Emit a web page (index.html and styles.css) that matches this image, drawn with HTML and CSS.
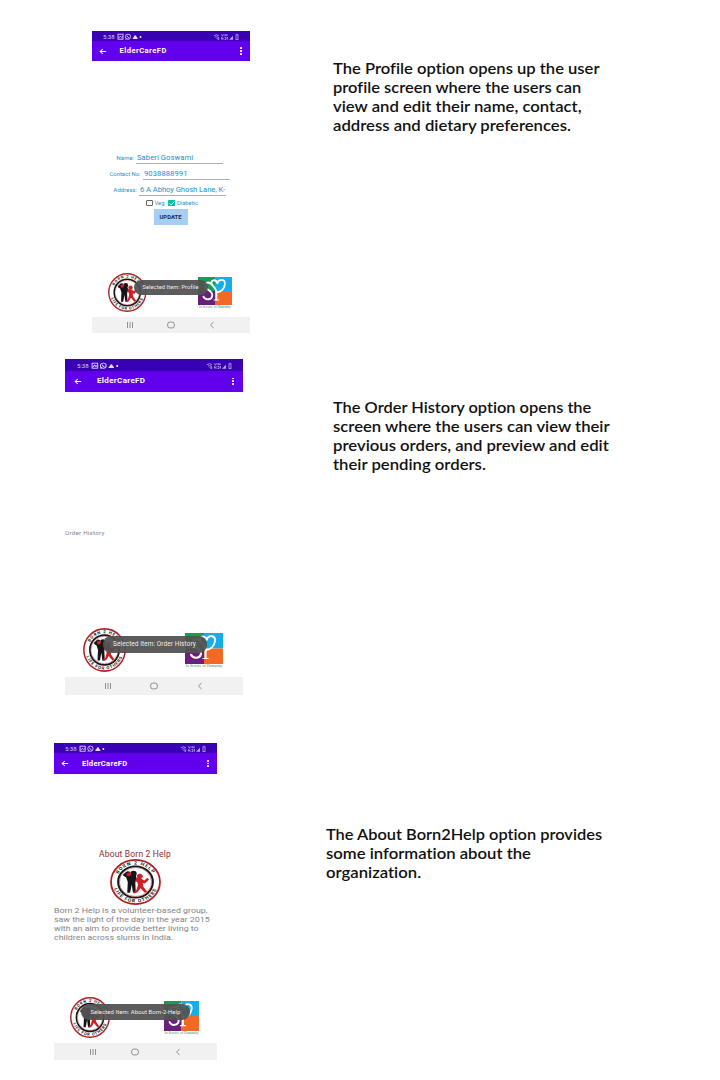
FILE: index.html
```html
<!DOCTYPE html>
<html lang="en">
<head>
<meta charset="utf-8">
<title>ElderCareFD</title>
<link rel="stylesheet" href="styles.css">
</head>
<body>
<svg class="defs" aria-hidden="true">
  <defs>
    <symbol id="notif" viewBox="0 0 26 8" preserveAspectRatio="none">
      <g fill="none" stroke="#dcd4ff" stroke-width=".9">
        <rect x="1" y="1.2" width="5" height="5"/><path d="M1.500 5.200l1.700-2 1.200 1.200 1.400-1"/>
        <circle cx="11" cy="3.700" r="2.600"/><path d="M10 2.700q.5 1.800 2.100 2.200M8.600 6.700l.8-1.500"/>
      </g>
      <path d="M15.700 6q-.2-1.500 1-1.800 .3-2 1.500-2 1.200 0 1.400 1.900 1.200.4 1 1.900z" fill="#e4dcff"/>
      <circle cx="23.500" cy="4" r=".9" fill="#fff"/>
    </symbol>
    <symbol id="signal" viewBox="0 0 26 8" preserveAspectRatio="none">
      <g fill="none" stroke="#b9a9ef" stroke-width=".8">
        <path d="M.8 2.800q2.500-2.200 5.200 0M2 4.200q1.500-1.200 3 0M3.300 5.200l2.500 1.500M5.700 4v2.700"/>
        <path d="M8.500 1.300l1 2 1-2M12 1.200v2M12 2.200h2M14 1.200v2M8.500 6.500v-2l1.500 2v-2M11.500 4.500h1.500v2h-1.500M14.500 4v2.600"/>
        <rect x="23" y="1.800" width="2" height="4.800"/><path d="M23.600 1.200h.8"/>
      </g>
      <path d="M16 6.800l4-4v4z" fill="#b9a9ef"/>
    </symbol>
    <symbol id="back" viewBox="0 0 10 10" preserveAspectRatio="none">
      <path d="M9 5H1.500M4.800 1.500L1.400 5l3.400 3.500" fill="none" stroke="#fff" stroke-width="1.300"/>
    </symbol>
    <symbol id="figures" viewBox="0 0 48 48">
      <g fill="#151318">
        <circle cx="21" cy="8" r="5.500"/>
        <path d="M3 9l7-6 6 1-2 4 5 3 6 1 2 7-3 4 1 22h-5l-2-16-3 16h-5l1-21-3-9-5-3z"/>
      </g>
      <g fill="#cf1f26">
        <circle cx="32" cy="13" r="5"/><path d="M9 7l6-2 3 4-4 4-5-1z"/>
        <path d="M26 16l8 1 6 4 5-5 3 3-7 8-4-1 1 7 7 10-4 2-8-9-5 8-6 2-1-3 5-3 3-11-2-6-4 2z"/>
      </g>
    </symbol>
    <symbol id="born" viewBox="0 0 100 100" preserveAspectRatio="none">
      <circle cx="50" cy="50" r="48" fill="#fff" stroke="#b01e22" stroke-width="3.500"/>
      <circle cx="50" cy="50" r="34" fill="#fff" stroke="#191417" stroke-width="4"/>
      <circle cx="50" cy="50" r="31.500" fill="none" stroke="#a83033" stroke-width="1"/>
      <path id="arcTop" d="M12 50a38 38 0 0 1 76 0" fill="none"/>
      <path id="arcBottom" d="M5.500 50a44.500 44.500 0 0 0 89 0" fill="none"/>
      <g class="ring-text">
        <text><textPath href="#arcTop" startOffset="50%">BORN 2 HELP</textPath></text>
        <text><textPath href="#arcBottom" startOffset="50%">LIFE FOR OTHERS</textPath></text>
      </g>
      <use href="#figures" x="22" y="23" width="55" height="54"/>
    </symbol>
    <symbol id="sp" viewBox="0 0 100 84" preserveAspectRatio="none">
      <path d="M0 0h50v42H0z" fill="#179b55"/><path d="M50 0h50v42H50z" fill="#14aee8"/>
      <path d="M0 42h50v42H0z" fill="#69207b"/><path d="M50 42h50v42H50z" fill="#f26824"/>
      <g fill="none" stroke="#fff" stroke-linecap="round">
        <path d="M40 22C31 12 17 17 21 29c4 10 22 13 21 26-1 14-20 16-26 4" stroke-width="5.500"/>
        <path d="M57 18C52 6 37 8 40 19c2 9 14 13 14 27v22" stroke-width="5.500"/>
        <path d="M57 18C62 4 81 6 79 22c-2 15-13 23-25 24" stroke-width="5"/>
        <path d="M47 69h14" stroke-width="3"/>
      </g>
    </symbol>
    <symbol id="recents" viewBox="0 0 8 8"><path d="M1.500 1v6M4 1v6M6.500 1v6" stroke="#858585" stroke-width=".9"/></symbol>
    <symbol id="home" viewBox="0 0 8 8"><rect x=".7" y="1.100" width="6.600" height="5.800" rx="2" fill="none" stroke="#858585" stroke-width=".9"/></symbol>
    <symbol id="prev" viewBox="0 0 8 8"><path d="M5.600 1L2.500 4l3.100 3" fill="none" stroke="#858585" stroke-width=".9"/></symbol>
  </defs>
</svg>

<main class="page">
  <section class="row row-profile">
    <div class="phone phone-profile">
      <div class="status"><span class="time">5:38</span><svg class="notif"><use href="#notif"/></svg><svg class="signal"><use href="#signal"/></svg></div>
      <div class="appbar"><svg class="back"><use href="#back"/></svg><span class="title">ElderCareFD</span><span class="dots"><i></i><i></i><i></i></span></div>
      <div class="screen">
        <form class="form">
          <div class="field name"><span class="label">Name:</span><span class="value">Saberi Goswami</span></div>
          <div class="field contact"><span class="label">Contact No:</span><span class="value">9038888991</span></div>
          <div class="field address"><span class="label">Address:</span><span class="value">6 A Abhoy Ghosh Lane, K-</span></div>
          <div class="checks">
            <span class="box"></span><span class="veg">Veg</span>
            <svg class="tick" viewBox="0 0 8 7"><rect width="8" height="7" rx=".8" fill="#0bbfa0"/><path d="M1.500 3.500l1.900 1.900 3.200-3.700" fill="none" stroke="#fff" stroke-width="1"/></svg><span class="diabetic">Diabetic</span>
          </div>
          <div class="update">UPDATE</div>
        </form>
      </div>
      <div class="logos"><svg class="born"><use href="#born"/></svg><div class="sp-logo"><svg class="sp"><use href="#sp"/></svg><span class="motto">In Service of Humanity</span></div><div class="toast"><span>Selected Item: Profile</span></div></div>
      <div class="nav"><svg><use href="#recents"/></svg><svg><use href="#home"/></svg><svg><use href="#prev"/></svg></div>
    </div>
    <p class="caption"><span class="l1">The Profile option opens up the user</span><span class="l2">profile screen where the users can</span><span class="l3">view and edit their name, contact,</span><span class="l4">address and dietary preferences.</span></p>
  </section>

  <section class="row row-orders">
    <div class="phone phone-orders">
      <div class="status"><span class="time">5:38</span><svg class="notif"><use href="#notif"/></svg><svg class="signal"><use href="#signal"/></svg></div>
      <div class="appbar"><svg class="back"><use href="#back"/></svg><span class="title">ElderCareFD</span><span class="dots"><i></i><i></i><i></i></span></div>
      <div class="screen"><p class="history"><span>Order History</span></p></div>
      <div class="logos"><svg class="born"><use href="#born"/></svg><div class="sp-logo"><svg class="sp"><use href="#sp"/></svg><span class="motto">In Service of Humanity</span></div><div class="toast"><span>Selected Item: Order History</span></div></div>
      <div class="nav"><svg><use href="#recents"/></svg><svg><use href="#home"/></svg><svg><use href="#prev"/></svg></div>
    </div>
    <p class="caption"><span class="l1">The Order History option opens the</span><span class="l2">screen where the users can view their</span><span class="l3">previous orders, and preview and edit</span><span class="l4">their pending orders.</span></p>
  </section>

  <section class="row row-about">
    <div class="phone phone-about">
      <div class="status"><span class="time">5:38</span><svg class="notif"><use href="#notif"/></svg><svg class="signal"><use href="#signal"/></svg></div>
      <div class="appbar"><svg class="back"><use href="#back"/></svg><span class="title">ElderCareFD</span><span class="dots"><i></i><i></i><i></i></span></div>
      <div class="screen about">
        <h2 class="heading">About Born 2 Help</h2>
        <svg class="emblem"><use href="#born"/></svg>
        <p class="story"><span>Born 2 Help is a volunteer-based group,</span><span>saw the light of the day in the year 2015</span><span>with an aim to provide better living to</span><span>children across slums in India.</span></p>
      </div>
      <div class="logos"><svg class="born"><use href="#born"/></svg><div class="sp-logo"><svg class="sp"><use href="#sp"/></svg><span class="motto">In Service of Humanity</span></div><div class="toast"><span>Selected Item: About Born-2-Help</span></div></div>
      <div class="nav"><svg><use href="#recents"/></svg><svg><use href="#home"/></svg><svg><use href="#prev"/></svg></div>
    </div>
    <p class="caption"><span class="l1">The About Born2Help option provides</span><span class="l2">some information about the</span><span class="l3">organization.</span></p>
  </section>
</main>
</body>
</html>
```
FILE: styles.css
```css
* { box-sizing: border-box; }
body { margin: 0; background: #fff; font-family: Roboto, "Liberation Sans", sans-serif; }
p, h2 { margin: 0; }
svg { display: block; flex: none; }
.defs { position: absolute; width: 0; height: 0; }
.page { width: 720px; height: 1080px; overflow: hidden; }
.row { display: flex; align-items: flex-start; }
.row-profile { height: 359px; padding: 31px 0 0 92px; }
.row-orders { height: 384px; padding-left: 65px; }
.row-about { height: 337px; padding-left: 54px; }

.phone { flex: none; display: flex; flex-direction: column; white-space: nowrap; }
.phone-profile { width: 157.500px; height: 302px; --status: 10px; --bar: 20px; --nav: 16px; --edge: 11px; --notif: 26px; --title: 12.500px; --logo-h: 44px; }
.phone-orders { width: 177.500px; height: 336px; --status: 12px; --bar: 20.500px; --nav: 18px; --edge: 12px; --notif: 29px; --title: 15px; --logo-h: 49px; }
.phone-about { width: 162.500px; height: 317px; --status: 10px; --bar: 21px; --nav: 17px; --edge: 11px; --notif: 27px; --title: 13px; --logo-h: 46px; }

.status { height: var(--status); background: #3a00b3; display: flex; align-items: center; padding: 1px 10.500px 0 var(--edge); }
.time { font-size: 6px; color: #dcd4ff; width: 13.500px; line-height: 8px; }
.notif { width: var(--notif); height: 8px; }
.signal { width: 26px; height: 8px; margin-left: auto; }
.appbar { height: var(--bar); background: #6200ee; display: flex; align-items: center; padding: 0 7.500px 0 7px; }
.back { width: 8px; height: 7px; }
.title { margin-left: var(--title); color: #fff; font-size: 7.600px; font-weight: 700; letter-spacing: .45px; line-height: 10px; }
.phone-orders .appbar { padding-left: 9px; padding-right: 8.500px; }
.phone-orders .title { font-size: 8px; letter-spacing: .34px; }
.phone-about .title { letter-spacing: .28px; }
.dots { margin-left: auto; width: 2px; display: grid; gap: 1px; }
.dots i { width: 1.700px; height: 1.700px; background: #fff; border-radius: 50%; }

.screen { flex: 1; min-height: 0; }
.form { padding-top: 91px; color: #2191c9; }
.field { display: flex; height: 16px; font-size: 5.900px; align-items: flex-start; line-height: 11px; }
.field .label { padding-top: 1px; }
.field .value { border-bottom: 1px solid #b5adad; height: 12px; font-size: 7.600px; width: 87px; padding-left: 1px; letter-spacing: .08px; }
.name { padding-left: 24.500px; }
.name .label { width: 19.500px; letter-spacing: .15px; }
.contact { padding-left: 17.500px; }
.contact .label { width: 33.500px; }
.address { padding-left: 21.500px; }
.address .label { width: 25.500px; letter-spacing: .08px; }
.address .value { letter-spacing: -.05px; }
.checks { display: flex; align-items: center; height: 8px; padding-left: 53.500px; font-size: 5.800px; line-height: 8px; margin-top: -1px; }
.box { width: 7px; height: 6.500px; border: 1px solid #666; border-radius: 1px; }
.veg { width: 13px; margin-left: 2px; }
.tick { width: 7.500px; height: 6.500px; }
.diabetic { margin-left: 2px; }
.update { width: 34px; height: 16px; margin: 1.500px 0 0 61.500px; background: #a6cdf3; color: #232c38; font-size: 5.900px; font-weight: 700; line-height: 16px; text-align: center; }

.logos { position: relative; height: var(--logo-h); display: flex; align-items: flex-start; }
.ring-text { font: 700 10px Roboto, sans-serif; fill: #222; text-anchor: middle; letter-spacing: 1.900px; }
.born { width: 38.500px; height: 39px; margin-left: 16px; }
.sp { width: 34px; height: 28px; }
.sp-logo { margin: 4px 0 0 51.500px; width: 34px; }
.motto { display: block; font: 400 3.400px/5px "Liberation Serif", serif; color: #388a65; text-align: center; }
.phone-orders .born { width: 43px; height: 44px; margin-left: 18px; }
.phone-orders .sp-logo { margin: 5px 0 0 59px; width: 38px; }
.phone-orders .sp { width: 38px; height: 31px; }
.phone-orders .motto { font-size: 3.900px; }
.phone-about .born { width: 40px; height: 41px; margin-left: 16px; }
.phone-about .sp-logo { margin: 4px 0 0 54px; width: 35px; }
.phone-about .sp { width: 35px; height: 30px; }
.phone-about .motto { font-size: 3.600px; }
.toast { position: absolute; left: 41.500px; top: 7px; width: 74px; height: 15px; border-radius: 8px; background: rgba(82, 82, 82, .94); color: #eee; font-size: 5.700px; letter-spacing: .1px; line-height: 15px; text-align: center; }
.phone-orders .toast { left: 37.500px; top: 8px; width: 104px; height: 17px; line-height: 17px; font-size: 6.400px; letter-spacing: .11px; }
.phone-about .toast { left: 27px; top: 7px; width: 109px; height: 16px; line-height: 16px; font-size: 5.900px; letter-spacing: .1px; }
.nav { height: var(--nav); background: #f1f1f1; display: flex; align-items: center; justify-content: center; gap: 33px; }
.nav svg { width: 8px; height: 8px; }
.phone-orders .nav { gap: 38px; }
.phone-about .nav { gap: 34.500px; }

.history { padding-top: 137.500px; color: #858585; font-size: 6.200px; letter-spacing: .25px; line-height: 9px; }
.about { display: flex; flex-direction: column; }
.heading { margin: 75px 0 0 45px; font-size: 8.500px; font-weight: 400; letter-spacing: .18px; line-height: 11px; color: #922b2e; }
.emblem { width: 51px; height: 46px; margin-left: 56px; margin-top: -1px; }
.story { color: #858585; font-size: 8px; line-height: 9.300px; margin-top: .5px; transform: scaleX(1.105); transform-origin: left; }
.story span { display: block; }

.caption { font-family: Lato, "Open Sans", sans-serif; font-size: 15px; font-weight: 600; font-variant-ligatures: none; line-height: 19.200px; color: #111; white-space: nowrap; }
.caption span { display: block; transform: scaleX(1.112); transform-origin: left; }
.row-profile .caption { margin: 27.500px 0 0 83px; }
.row-profile .caption .l1 { transform: scaleX(1.105); }
.row-profile .caption .l2 { transform: scaleX(1.098); }
.row-orders .caption { margin: 38.500px 0 0 90px; }
.row-orders .caption .l1 { transform: scaleX(1.093); }
.row-about .caption { margin: 82px 0 0 109.500px; }
.row-about .caption .l1 { transform: scaleX(1.092); }
```
